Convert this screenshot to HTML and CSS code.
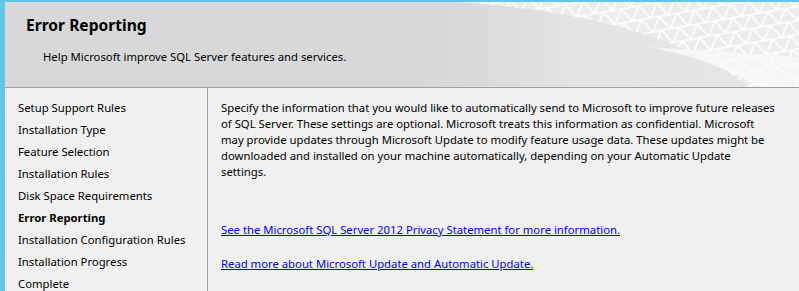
FILE: index.html
```html
<!DOCTYPE html>
<html>
<head>
  <link rel="stylesheet" href="styles.css">
  <title>Error Reporting</title>
</head>
<body>
  <div class="window">
    <div class="header">
      <svg class="header-art" width="380" height="85" viewBox="0 0 380 85">
        <defs>
          <pattern id="mesh" width="18" height="14" patternUnits="userSpaceOnUse" patternTransform="rotate(-10)">
            <path d="M0 0 L18 0 M0 0 L9 14 M18 0 L9 14 M0 14 L18 14" stroke="#ffffff" stroke-width="1.6" fill="none"/>
          </pattern>
          <clipPath id="wave">
            <path d="M40 0 C150 8 260 30 330 85 L380 85 L380 0 Z"/>
          </clipPath>
          <linearGradient id="fade" x1="0" y1="0" x2="1" y2="0">
            <stop offset="0" stop-color="#dadadd" stop-opacity="0"/>
            <stop offset="0.4" stop-color="#e4e4e6"/>
            <stop offset="1" stop-color="#e6e6e8"/>
          </linearGradient>
        </defs>
        <rect x="0" y="0" width="380" height="85" fill="url(#fade)"/>
        <path d="M40 0 C150 8 260 30 330 85 L380 85 L380 0 Z" fill="#ececee"/>
        <rect x="0" y="0" width="380" height="85" fill="url(#mesh)" clip-path="url(#wave)"/>
        <path d="M230 45 C280 55 315 70 340 85 L380 85 L380 55 Z" fill="#fafafa" opacity="0.75"/>
      </svg>
      <h1 class="title">Error Reporting</h1>
      <div class="subtitle">Help Microsoft improve SQL Server features and services.</div>
    </div>
    <div class="main">
      <ul class="steps">
        <li>Setup Support Rules</li>
        <li>Installation Type</li>
        <li>Feature Selection</li>
        <li>Installation Rules</li>
        <li>Disk Space Requirements</li>
        <li class="current">Error Reporting</li>
        <li>Installation Configuration Rules</li>
        <li>Installation Progress</li>
        <li>Complete</li>
      </ul>
      <div class="content">
        <p class="intro">Specify the information that you would like to automatically send to Microsoft to improve future releases<br>
        of SQL Server. These settings are optional. Microsoft treats this information as confidential. Microsoft<br>
        may provide updates through Microsoft Update to modify feature usage data. These updates might be<br>
        downloaded and installed on your machine automatically, depending on your Automatic Update<br>
        settings.</p>
        <a class="link first" href="#">See the Microsoft SQL Server 2012 Privacy Statement for more information.</a>
        <a class="link" href="#">Read more about Microsoft Update and Automatic Update.</a>
      </div>
    </div>
  </div>
</body>
</html>
```

FILE: styles.css
```css
body {
  margin: 0;
  font-family: "Noto Sans", "Open Sans", sans-serif;
  font-size: 11.3px;
  color: #000;
  background-color: #f0f0f0;
  overflow: hidden;
}

.window {
  height: 291px;
  border-left: 5px solid #63c5e8;
  border-top: 2px solid #63c5e8;
  box-sizing: border-box;
}

.header {
  position: relative;
  height: 85px;
  background-color: #d8d8db;
  border-bottom: 1px solid #a0a0a0;
  overflow: hidden;
}

.header-art {
  position: absolute;
  right: 0;
  top: 0;
}

.title {
  position: relative;
  margin: 0;
  padding: 12px 0 0 21px;
  font-size: 15.6px;
  font-weight: bold;
  line-height: 22px;
}

.subtitle {
  position: relative;
  padding: 13px 0 0 38px;
  line-height: 16px;
}

.main {
  display: flex;
  height: 203px;
}

.steps {
  flex: none;
  list-style: none;
  margin: 0;
  padding: 9px 0 0 13px;
  width: 189px;
  border-right: 1px solid #a0a0a0;
}

.steps li {
  line-height: 22px;
  white-space: nowrap;
}

.steps .current {
  font-weight: bold;
}

.content {
  flex: 1;
  min-width: 0;
  padding: 12px 0 0 13px;
}

.intro {
  margin: 0;
  line-height: 16px;
  white-space: nowrap;
}

.link {
  display: block;
  width: max-content;
  color: #0000ff;
  line-height: 16px;
  margin-top: 42px;
}

.link + .link {
  margin-top: 18px;
}
```
